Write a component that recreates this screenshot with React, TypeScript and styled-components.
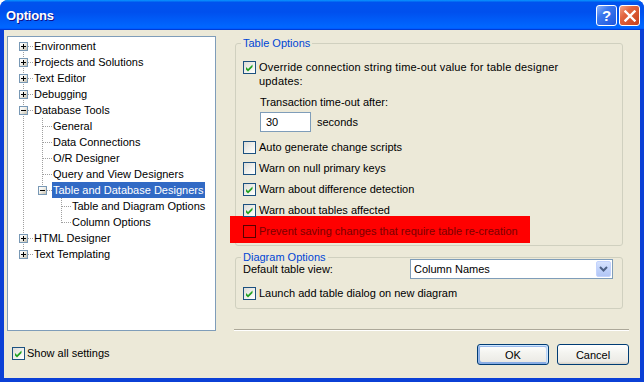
import React from 'react';
import styled, { createGlobalStyle, css } from 'styled-components';

const GlobalStyle = createGlobalStyle`
  html, body { margin: 0; padding: 0; background: #ffffff; }
  body { font-family: 'Liberation Sans', Arial, sans-serif; font-size: 11px; color: #000; }
  *, *::before, *::after { box-sizing: border-box; }
`;

const Window = styled.div`
  width: 644px;
  height: 382px;
  display: flex;
  flex-direction: column;
  background: #0b40d6;
  border-radius: 8px 8px 0 0;
  overflow: hidden;
`;

const TitleBar = styled.div`
  height: 30px;
  flex: none;
  display: flex;
  align-items: center;
  padding: 1px 4px 0 6px;
  background: linear-gradient(180deg, #0997ff 0%, #0053ee 8%, #0050ee 40%, #0066ff 88%, #0066ff 93%, #005bff 95%, #003dd7 96%, #003dd7 100%);
`;

const Title = styled.div`
  flex: 1;
  color: #fff;
  font-family: 'Liberation Sans', Arial, sans-serif;
  font-weight: bold;
  font-size: 13px;
  letter-spacing: -0.2px;
  text-shadow: 1px 1px #0f1089;
`;

const CaptionButtons = styled.div`
  display: flex;
  gap: 2px;
`;

const CaptionButton = styled.div<{ $kind: 'help' | 'close' }>`
  width: 21px;
  height: 21px;
  border: 1px solid #fff;
  border-radius: 3px;
  display: flex;
  align-items: center;
  justify-content: center;
  color: #fff;
  font-family: 'Liberation Sans', Arial, sans-serif;
  font-weight: bold;
  font-size: 15px;
  ${({ $kind }) =>
    $kind === 'help'
      ? css`background: linear-gradient(135deg, #8fb4fa 0%, #3c78ee 35%, #1e56de 100%);`
      : css`background: linear-gradient(135deg, #f3a488 0%, #e2653f 35%, #c7401b 100%);`}
`;

const Client = styled.div`
  flex: 1;
  margin: 0 4px 4px 4px;
  background: #ece9d8;
  display: flex;
  flex-direction: column;
  padding: 6px 11px 13px 3px;
`;

const TopRow = styled.div`
  display: flex;
  height: 295px;
`;

const TreeBox = styled.div`
  width: 209px;
  height: 100%;
  flex: none;
  border: 1px solid #7f9db9;
  background: #fff;
  padding: 1px 0 0 6px;
  overflow: hidden;
`;

const TreeRow = styled.div`
  display: flex;
  height: 16px;
`;

type V = 'none' | 'full' | 'top' | 'bottom';
const dotV = 'repeating-linear-gradient(to bottom, #a0a0a0 0px, #a0a0a0 1px, transparent 1px, transparent 2px)';
const dotH = 'repeating-linear-gradient(to right, #a0a0a0 0px, #a0a0a0 1px, transparent 1px, transparent 2px)';

const Cell = styled.span<{ $v: V; $h: boolean }>`
  flex: none;
  width: 19px;
  height: 16px;
  display: flex;
  align-items: flex-start;
  padding: 4px 0 0 5px;
  background-repeat: no-repeat;
  ${({ $v, $h }) => {
    const imgs: string[] = [];
    const pos: string[] = [];
    const size: string[] = [];
    if ($v !== 'none') {
      imgs.push(dotV);
      pos.push(`9px ${$v === 'bottom' ? 8 : 0}px`);
      size.push(`1px ${$v === 'full' ? 16 : $v === 'top' ? 9 : 8}px`);
    }
    if ($h) {
      imgs.push(dotH);
      pos.push('10px 8px');
      size.push('9px 1px');
    }
    return imgs.length
      ? css`
          background-image: ${imgs.join(', ')};
          background-position: ${pos.join(', ')};
          background-size: ${size.join(', ')};
        `
      : '';
  }}
`;

const Expander = styled.span`
  width: 9px;
  height: 9px;
  border: 1px solid #7898b5;
  background: linear-gradient(135deg, #ffffff 0%, #f4f3ee 40%, #c5bfae 100%);
  display: flex;
`;

const NodeLabel = styled.span<{ $sel?: boolean }>`
  height: 16px;
  line-height: 16px;
  padding: 0 2px 0 1px;
  white-space: nowrap;
  ${({ $sel }) => $sel && css`background: #316ac5; color: #fff;`}
`;

const RightPane = styled.div`
  flex: 1;
  margin-left: 18px;
  display: flex;
  flex-direction: column;
`;

const GroupBox = styled.fieldset<{ $first?: boolean }>`
  margin: ${({ $first }) => ($first ? '0' : '4px')} 6px 0 1px;
  border: 1px solid #d0d0bf;
  border-radius: 3px;
  padding: ${({ $first }) => ($first ? '10px 9px 2px 7px' : '0 9px 8px 7px')};
  min-width: 0;
`;

const Legend = styled.legend`
  color: #0046d5;
  padding: 0 2px;
  margin-left: -2px;
  line-height: 14px;
  font-size: 11px;
`;

const CheckRow = styled.div<{ $gap?: number; $alert?: boolean }>`
  display: flex;
  align-items: flex-start;
  gap: 3px;
  line-height: 14px;
  margin-top: ${({ $gap }) => $gap ?? 0}px;
  ${({ $alert }) =>
    $alert &&
    css`
      background: #ff0000;
      color: #7a0000;
      width: 300px;
      margin-left: -13px;
      padding: 8px 0 5px 13px;
    `}
`;

const Box = styled.span<{ $alert?: boolean }>`
  flex: none;
  width: 13px;
  height: 13px;
  margin-top: 1px;
  border: 1px solid #1c5180;
  background: linear-gradient(135deg, #dcdcd7 0%, #f3f3ef 60%, #ffffff 100%);
  display: flex;
  ${({ $alert }) => $alert && css`border-color: #5a0000; background: transparent;`}
`;

const Text = styled.span``;

const WideText = styled.span`
  letter-spacing: 0.18px;
`;

const SubLabel = styled.div<{ $gap: number }>`
  margin: ${({ $gap }) => $gap}px 0 0 17px;
  line-height: 14px;
`;

const InputRow = styled.div`
  display: flex;
  align-items: center;
  gap: 6px;
  margin: 3px 0 0 17px;
`;

const TextInput = styled.div`
  width: 51px;
  height: 20px;
  border: 1px solid #7f9db9;
  background: #fff;
  padding-left: 5px;
  line-height: 18px;
`;

const FieldRow = styled.div`
  display: flex;
  align-items: center;
  margin-top: -5px;
`;

const FieldLabel = styled.span`
  width: 167px;
  flex: none;
`;

const Select = styled.div`
  width: 203px;
  height: 20px;
  border: 1px solid #7f9db9;
  background: #fff;
  display: flex;
  align-items: center;
  padding-left: 3px;
`;

const SelectText = styled.span`
  flex: 1;
`;

const DropButton = styled.span`
  width: 15px;
  height: 16px;
  margin: 1px;
  border: 1px solid #c3d3fd;
  border-radius: 2px;
  background: linear-gradient(180deg, #d6e2fd 0%, #c1d3fb 50%, #b2c6f5 100%);
  display: flex;
  align-items: center;
  justify-content: center;
`;

const Separator = styled.div`
  margin-top: auto;
  height: 2px;
  border-top: 1px solid #aca899;
  border-bottom: 1px solid #ffffff;
`;

const BottomRow = styled.div`
  display: flex;
  align-items: flex-start;
  height: 21px;
  margin-top: 13px;
  padding-left: 5px;
`;

const ShowAll = styled.div`
  display: flex;
  align-items: flex-start;
  gap: 2px;
  line-height: 14px;
  margin-top: 2px;
`;

const ButtonGroup = styled.div`
  margin-left: auto;
  display: flex;
  gap: 8px;
`;

const Button = styled.div<{ $default?: boolean }>`
  width: 72px;
  height: 21px;
  border: 1px solid #003c74;
  border-radius: 3px;
  background: linear-gradient(180deg, #ffffff 0%, #f4f4f0 40%, #ecebe6 86%, #d6d0c5 100%);
  display: flex;
  align-items: center;
  justify-content: center;
  ${({ $default }) =>
    $default &&
    css`
      box-shadow: inset -1px 1px #cee7ff, inset 1px 2px #98b8ea, inset -2px 2px #bcd4f6, inset 1px -1px #89ade4, inset 2px -2px #89ade4;
    `}
`;

const Check = () => (
  <svg width="11" height="11" viewBox="0 0 11 11">
    <path d="M2 5 L4 7 L8.5 2.5 L8.5 5 L4 9.5 L2 7.5 Z" fill="#21a121" />
  </svg>
);

const CheckBox = ({ checked, alert }: { checked?: boolean; alert?: boolean }) => (
  <Box $alert={alert}>{checked && <Check />}</Box>
);

const PlusMinus = ({ open }: { open: boolean }) => (
  <svg width="7" height="7" viewBox="0 0 7 7">
    <rect x="1" y="3" width="5" height="1" fill="#000" />
    {!open && <rect x="3" y="1" width="1" height="5" fill="#000" />}
  </svg>
);

type CellSpec = { v: V; h?: boolean; exp?: 'plus' | 'minus' };
type Node = { label: string; cells: CellSpec[]; sel?: boolean };

const P: CellSpec = { v: 'full' };
const N: CellSpec = { v: 'none' };

const nodes: Node[] = [
  { label: 'Environment', cells: [{ v: 'bottom', h: true, exp: 'plus' }] },
  { label: 'Projects and Solutions', cells: [{ v: 'full', h: true, exp: 'plus' }] },
  { label: 'Text Editor', cells: [{ v: 'full', h: true, exp: 'plus' }] },
  { label: 'Debugging', cells: [{ v: 'full', h: true, exp: 'plus' }] },
  { label: 'Database Tools', cells: [{ v: 'full', h: true, exp: 'minus' }] },
  { label: 'General', cells: [P, { v: 'full', h: true }] },
  { label: 'Data Connections', cells: [P, { v: 'full', h: true }] },
  { label: 'O/R Designer', cells: [P, { v: 'full', h: true }] },
  { label: 'Query and View Designers', cells: [P, { v: 'full', h: true }] },
  { label: 'Table and Database Designers', cells: [P, { v: 'top', h: true, exp: 'minus' }], sel: true },
  { label: 'Table and Diagram Options', cells: [P, N, { v: 'full', h: true }] },
  { label: 'Column Options', cells: [P, N, { v: 'top', h: true }] },
  { label: 'HTML Designer', cells: [{ v: 'full', h: true, exp: 'plus' }] },
  { label: 'Text Templating', cells: [{ v: 'top', h: true, exp: 'plus' }] },
];

export default function App() {
  return (
    <>
      <GlobalStyle />
      <Window>
        <TitleBar>
          <Title>Options</Title>
          <CaptionButtons>
            <CaptionButton $kind="help">?</CaptionButton>
            <CaptionButton $kind="close">
              <svg width="12" height="12" viewBox="0 0 12 12">
                <path d="M1.5 1.5 L10.5 10.5 M10.5 1.5 L1.5 10.5" stroke="#fff" strokeWidth="2.4" strokeLinecap="square" />
              </svg>
            </CaptionButton>
          </CaptionButtons>
        </TitleBar>
        <Client>
          <TopRow>
            <TreeBox>
              {nodes.map((n) => (
                <TreeRow key={n.label}>
                  {n.cells.map((c, i) => (
                    <Cell key={i} $v={c.v} $h={!!c.h}>
                      {c.exp && (
                        <Expander>
                          <PlusMinus open={c.exp === 'minus'} />
                        </Expander>
                      )}
                    </Cell>
                  ))}
                  <NodeLabel $sel={n.sel}>{n.label}</NodeLabel>
                </TreeRow>
              ))}
            </TreeBox>
            <RightPane>
              <GroupBox $first>
                <Legend>Table Options</Legend>
                <CheckRow>
                  <CheckBox checked />
                  <WideText>
                    Override connection string time-out value for table designer
                    <br />
                    updates:
                  </WideText>
                </CheckRow>
                <SubLabel $gap={7}>Transaction time-out after:</SubLabel>
                <InputRow>
                  <TextInput>30</TextInput>
                  <Text>seconds</Text>
                </InputRow>
                <CheckRow $gap={8}>
                  <CheckBox />
                  <Text>Auto generate change scripts</Text>
                </CheckRow>
                <CheckRow $gap={7}>
                  <CheckBox />
                  <Text>Warn on null primary keys</Text>
                </CheckRow>
                <CheckRow $gap={7}>
                  <CheckBox checked />
                  <Text>Warn about difference detection</Text>
                </CheckRow>
                <CheckRow $gap={7}>
                  <CheckBox checked />
                  <Text>Warn about tables affected</Text>
                </CheckRow>
                <CheckRow $gap={-1} $alert>
                  <CheckBox alert />
                  <Text>Prevent saving changes that require table re-creation</Text>
                </CheckRow>
              </GroupBox>
              <GroupBox>
                <Legend>Diagram Options</Legend>
                <FieldRow>
                  <FieldLabel>Default table view:</FieldLabel>
                  <Select>
                    <SelectText>Column Names</SelectText>
                    <DropButton>
                      <svg width="9" height="6" viewBox="0 0 9 6">
                        <path d="M1 1 L4.5 4.5 L8 1" fill="none" stroke="#4d6185" strokeWidth="2" />
                      </svg>
                    </DropButton>
                  </Select>
                </FieldRow>
                <CheckRow $gap={7}>
                  <CheckBox checked />
                  <Text>Launch add table dialog on new diagram</Text>
                </CheckRow>
              </GroupBox>
              <Separator />
            </RightPane>
          </TopRow>
          <BottomRow>
            <ShowAll>
              <CheckBox checked />
              <Text>Show all settings</Text>
            </ShowAll>
            <ButtonGroup>
              <Button $default>OK</Button>
              <Button>Cancel</Button>
            </ButtonGroup>
          </BottomRow>
        </Client>
      </Window>
    </>
  );
}
